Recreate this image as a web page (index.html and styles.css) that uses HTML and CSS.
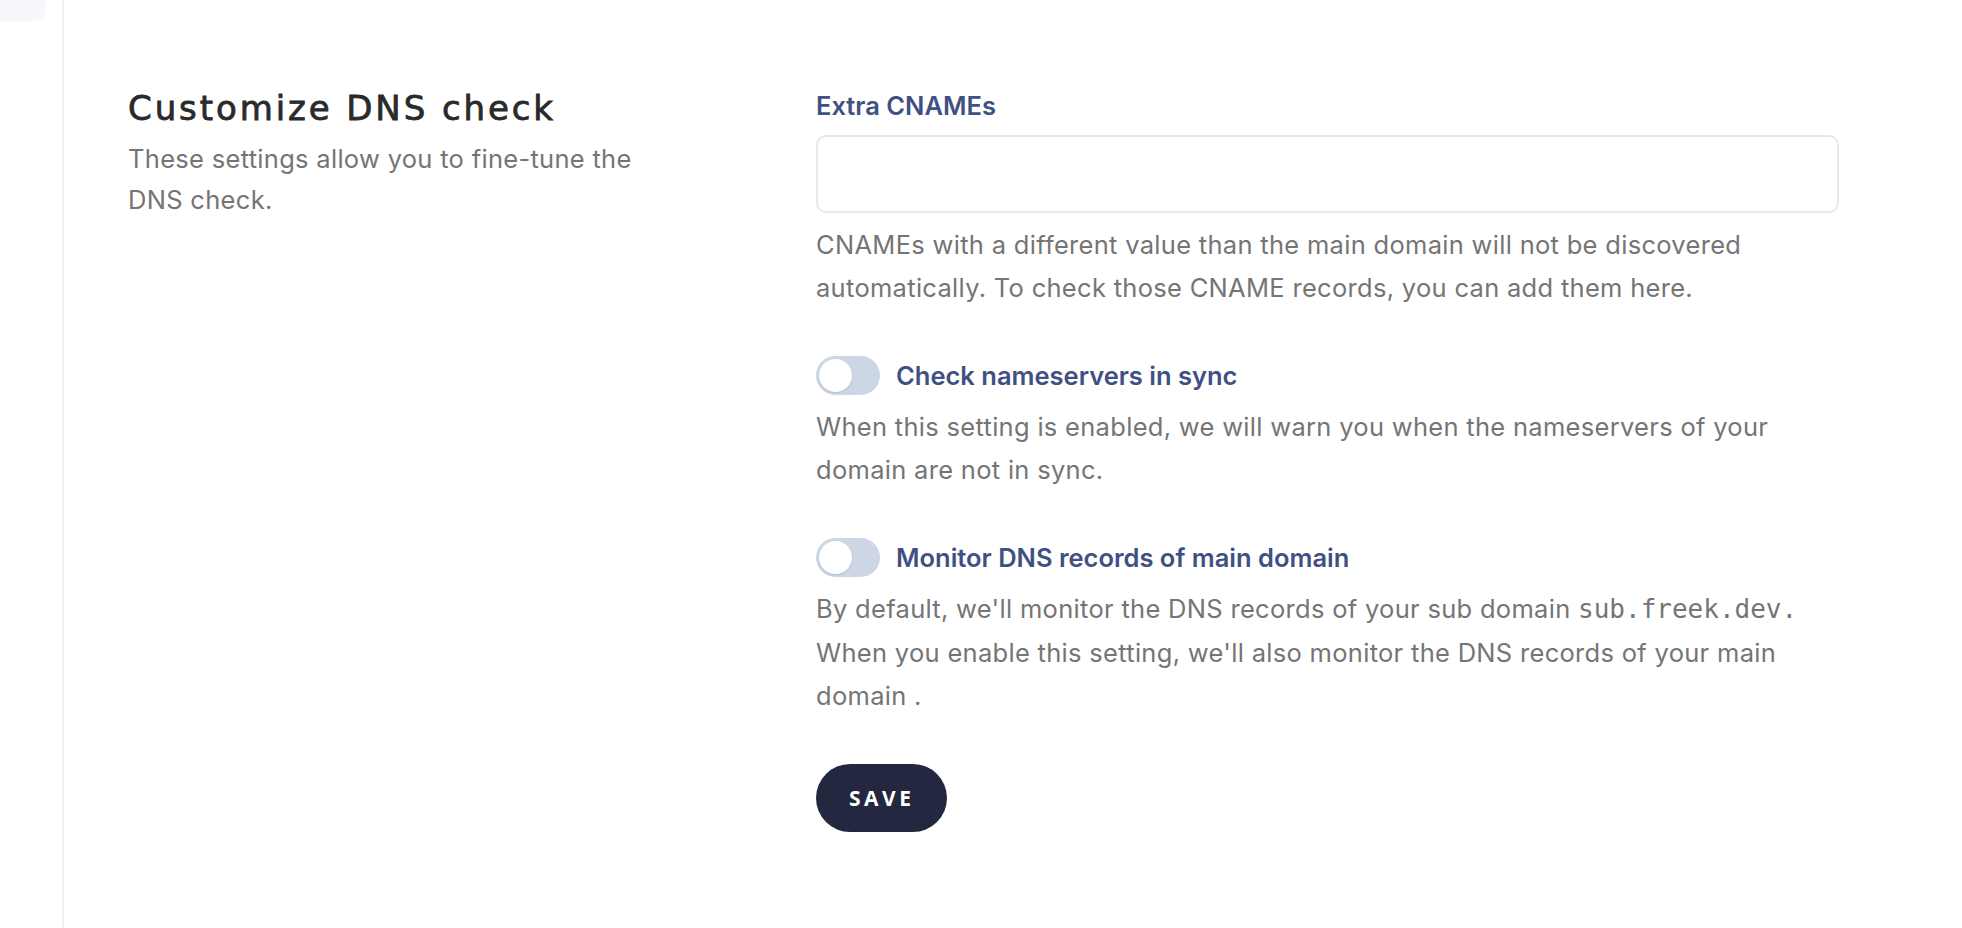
FILE: index.html
```html
<!DOCTYPE html>
<html lang="en">
<head>
    <meta charset="UTF-8">
    <meta name="viewport" content="width=device-width, initial-scale=1.0">
    <title>Customize DNS check</title>
    <link rel="stylesheet" href="styles.css">
</head>
<body>
    <div class="layout">
        <aside class="sidebar">
            <div class="sidebar-item"></div>
        </aside>
        <main class="content">
            <section class="settings-section">
                <div class="section-intro">
                    <h2>Customize DNS check</h2>
                    <p>These settings allow you to fine-tune the DNS check.</p>
                </div>
                <form class="section-form" onsubmit="return false;">
                    <div class="field">
                        <label for="extra-cnames" class="field-label">Extra CNAMEs</label>
                        <input type="text" id="extra-cnames" class="text-input">
                        <p class="help">CNAMEs with a different value than the main domain will not be discovered automatically. To check those CNAME records, you can add them here.</p>
                    </div>
                    <div class="field">
                        <label class="toggle-row">
                            <span class="toggle"><span class="knob"></span></span>
                            <span class="field-label">Check nameservers in sync</span>
                        </label>
                        <p class="help">When this setting is enabled, we will warn you when the nameservers of your domain are not in sync.</p>
                    </div>
                    <div class="field">
                        <label class="toggle-row">
                            <span class="toggle"><span class="knob"></span></span>
                            <span class="field-label">Monitor DNS records of main domain</span>
                        </label>
                        <p class="help">By default, we'll monitor the DNS records of your sub domain <code>sub.freek.dev.</code> When you enable this setting, we'll also monitor the DNS records of your main domain .</p>
                    </div>
                    <div class="form-actions">
                        <button type="submit" class="btn-save">Save</button>
                    </div>
                </form>
            </section>
        </main>
    </div>
</body>
</html>
```

FILE: styles.css
```css
body {
    font-family: Inter, 'Liberation Sans', Arial, sans-serif;
    background: #fff;
    color: #222;
    margin: 0;
    padding: 0;
}
.layout {
    display: flex;
    min-height: 100vh;
}
.sidebar {
    width: 62px;
    flex-shrink: 0;
    border-right: 2px solid #eef2f7;
}
.sidebar-item {
    width: 45px;
    height: 21px;
    background: #f5f7fd;
    border-bottom-right-radius: 10px;
}
.content {
    flex: 1;
    padding: 88px 0 0 64px;
}
.settings-section {
    display: grid;
    grid-template-columns: 688px 1023px;
}
.section-intro h2 {
    font-family: 'DejaVu Sans', 'Open Sans', sans-serif;
    font-weight: 400;
    font-size: 34px;
    line-height: 40px;
    letter-spacing: 2.9px;
    -webkit-text-stroke: 0.8px #2a2a2a;
    color: #2a2a2a;
    margin: 0 0 10px;
}
.section-intro p {
    font-size: 25.5px;
    line-height: 41px;
    letter-spacing: 0.3px;
    color: #757575;
    margin: 0;
    max-width: 510px;
}
.section-form {
    display: flex;
    flex-direction: column;
    gap: 47px;
}
.field {
    display: flex;
    flex-direction: column;
    gap: 10px;
}
.field-label {
    font-size: 25.5px;
    font-weight: 600;
    line-height: 36px;
    color: #3f5183;
}
.field > .field-label {
    margin-bottom: 1px;
}
.text-input {
    height: 78px;
    box-sizing: border-box;
    border: 2px solid #e4e8ef;
    border-radius: 10px;
    font-size: 24px;
    padding: 0 18px;
    outline: none;
}
.help {
    font-size: 25.5px;
    line-height: 43px;
    letter-spacing: 0.3px;
    color: #757575;
    margin: 0;
}
.help code {
    font-family: 'DejaVu Sans Mono', 'Liberation Mono', monospace;
    font-size: 26px;
    letter-spacing: 0;
    color: #757575;
}
.toggle-row {
    display: flex;
    align-items: center;
    gap: 16px;
}
.toggle {
    position: relative;
    width: 64px;
    height: 39px;
    border-radius: 20px;
    background: #cdd6e4;
    flex-shrink: 0;
}
.knob {
    position: absolute;
    left: 3px;
    top: 3px;
    width: 33px;
    height: 33px;
    border-radius: 50%;
    background: #fff;
    box-shadow: 0 1px 2px rgba(0,0,0,0.12);
}
.btn-save {
    height: 68px;
    padding: 0 33px;
    border: none;
    border-radius: 34px;
    background: #232840;
    color: #fff;
    font-family: 'Open Sans', sans-serif;
    font-weight: 700;
    font-size: 21px;
    letter-spacing: 3.5px;
    text-transform: uppercase;
}
```
